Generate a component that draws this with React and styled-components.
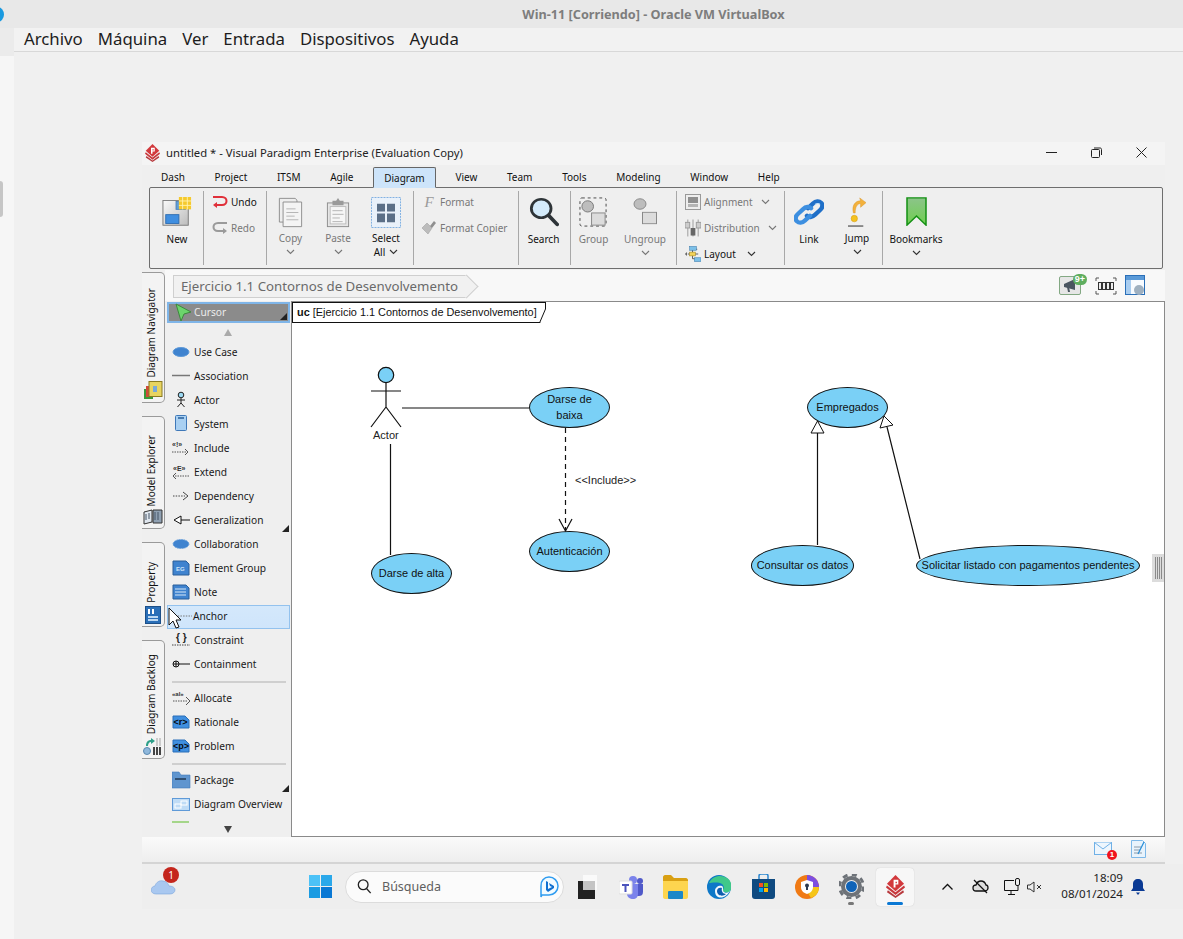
import React from "react";
import styled, { createGlobalStyle } from "styled-components";

const UI = `"Noto Sans", "Open Sans", sans-serif`;
const ARIAL = `"Liberation Sans", Arial, sans-serif`;

const GlobalStyle = createGlobalStyle`
  html, body { margin: 0; padding: 0; background: #f0f0f0; }
  * { box-sizing: border-box; }
`;

/* ---------- small svg helpers ---------- */
const Chevron = ({ color = "#333" }) => (
  <svg width="9" height="6" viewBox="0 0 9 6"><path d="M1 1l3.5 3.5L8 1" fill="none" stroke={color} strokeWidth="1.1" /></svg>
);

const VpLogo = ({ w = 15, h = 18 }) => (
  <svg width={w} height={h} viewBox="0 0 20 24">
    <path d="M10 0l9 9-9 8-9-8z" fill="#d2383c" />
    <path d="M1 11l9 7 9-7 1 2-10 8L0 13z" fill="#c9383c" />
    <path d="M2 16l8 6 8-6 1 2-9 6-9-6z" fill="#b83a3e" />
    <path d="M8 5h5v5h-3v3H8z" fill="#fff" />
    <path d="M10 7h1.5v1.5H10z" fill="#d2383c" />
  </svg>
);

const NewIcon = () => (
  <svg width="30" height="30" viewBox="0 0 32 34" preserveAspectRatio="none">
    <defs><linearGradient id="newg" x1="0" y1="0" x2="1" y2="1"><stop offset="0" stopColor="#fafafa" /><stop offset="1" stopColor="#bcbcbc" /></linearGradient></defs>
    <rect x="1" y="4" width="27" height="28" fill="url(#newg)" stroke="#777" />
    <rect x="15" y="5" width="10" height="9" fill="#5f9ed8" stroke="#4a80b8" />
    <rect x="4" y="20" width="14" height="10" fill="#3f8ee0" stroke="#2d6cb0" />
    <rect x="18" y="0" width="13" height="14" fill="#f5c92d" />
    <path d="M22 0v14M27 0v14M18 4.500h13M18 9.500h13" stroke="#fff3b0" strokeWidth="1" />
  </svg>
);

const UndoArrow = () => (
  <svg width="16" height="14" viewBox="0 0 16 14">
    <path d="M1 2h9c3 0 4.500 2 4.500 4s-1.500 4-4.500 4H4" fill="none" stroke="#e0303a" strokeWidth="2" />
    <path d="M5 7l-4 3 4 3z" fill="#e0303a" />
  </svg>
);

const RedoArrow = () => (
  <svg width="16" height="14" viewBox="0 0 16 14">
    <path d="M15 2H6C3 2 1.500 4 1.500 6S3 10 6 10h6" fill="none" stroke="#9a9a9a" strokeWidth="2" />
    <path d="M11 7l4 3-4 3z" fill="#9a9a9a" />
  </svg>
);

const CopyIcon = () => (
  <svg width="25" height="31" viewBox="0 0 27 34" preserveAspectRatio="none" fill="#eee" stroke="#8a8a8a">
    <path d="M1.500 1.500h17l2 2v24h-19z" />
    <path d="M5.500 5.500h20v27h-20z" fill="#f4f4f4" />
    <path d="M9 13h10M9 17h13M9 21h9M9 25h13" stroke="#b0b0b0" />
  </svg>
);

const PasteIcon = () => (
  <svg width="24" height="31" viewBox="0 0 26 34" preserveAspectRatio="none">
    <rect x="1.500" y="6.500" width="23" height="26" fill="#e6e6e6" stroke="#8a8a8a" />
    <rect x="4.500" y="10.500" width="17" height="19" fill="#f6f6f6" stroke="#bbb" />
    <path d="M13 1l2 3h4v5H7V4h4z" fill="#9a9a9a" />
    <path d="M7 15h11M7 19h12M7 23h8M7 27h11" stroke="#b0b0b0" />
  </svg>
);

const SelectAllIcon = () => (
  <svg width="30" height="31" viewBox="0 0 30 32" preserveAspectRatio="none">
    <rect x="0.500" y="0.500" width="29" height="31" fill="#e9f1fa" stroke="#7fb0e2" strokeDasharray="2 1" />
    <path d="M6 7h8v8H6zM16 7h8v8h-8zM6 17h8v9H6zM16 17h8v9h-8z" fill="#5b6f87" />
  </svg>
);

const FormatCopierIcon = () => (
  <svg width="16" height="16" viewBox="0 0 16 16">
    <path d="M6 3l5 5-4 6-6-6z" fill="#bcbcbc" stroke="#999" strokeWidth=".5" />
    <path d="M9 6l4-5 2 2-4 5z" fill="#8f8f8f" />
  </svg>
);

const SearchIcon = () => (
  <svg width="30" height="30" viewBox="0 0 32 34" preserveAspectRatio="none">
    <circle cx="13" cy="13" r="10.500" fill="#d4ebfb" stroke="#2e3438" strokeWidth="3" />
    <path d="M21 21l9 10" stroke="#2e3438" strokeWidth="4" strokeLinecap="round" />
  </svg>
);

const GroupIcon = () => (
  <svg width="29" height="30" viewBox="0 0 30 32" preserveAspectRatio="none">
    <rect x="1" y="1" width="27" height="30" fill="none" stroke="#444" strokeDasharray="3 3" rx="2" />
    <circle cx="9" cy="10" r="6" fill="#bdbdbd" stroke="#777" />
    <rect x="13" y="17" width="14" height="13" fill="#dcdcdc" stroke="#888" />
  </svg>
);

const UngroupIcon = () => (
  <svg width="26" height="28" viewBox="0 0 26 32" preserveAspectRatio="none">
    <circle cx="8" cy="8" r="6" fill="#bdbdbd" stroke="#888" />
    <rect x="10.500" y="17.500" width="14" height="13" fill="#dcdcdc" stroke="#888" />
  </svg>
);

const AlignIcon = () => (
  <svg width="16" height="16" viewBox="0 0 16 16">
    <rect x=".5" y=".5" width="15" height="15" fill="#eee" stroke="#999" />
    <rect x="3" y="3" width="10" height="6" fill="#8f8f8f" />
    <rect x="3" y="10" width="10" height="3" fill="#b5b5b5" />
  </svg>
);

const DistributeIcon = () => (
  <svg width="16" height="18" viewBox="0 0 17 18">
    <path d="M3 0v18M8.500 0v18M14 0v18" stroke="#999" />
    <rect x="0" y="3" width="5" height="6" fill="#ccc" stroke="#999" />
    <rect x="6" y="9" width="5" height="8" fill="#666" />
    <rect x="12" y="3" width="5" height="6" fill="#ccc" stroke="#999" />
  </svg>
);

const LayoutIcon = () => (
  <svg width="16" height="16" viewBox="0 0 17 16">
    <path d="M8 3v10M3 8h11M8 3h5M8 13h5" stroke="#555" />
    <rect x="5" y="0" width="7" height="4" fill="#7cc0e8" stroke="#3f7fb0" strokeWidth=".6" />
    <rect x="5" y="6" width="6" height="4" fill="#f2d25a" stroke="#a88a20" strokeWidth=".6" />
    <rect x="10" y="12" width="7" height="4" fill="#7cc0e8" stroke="#3f7fb0" strokeWidth=".6" />
    <path d="M0 8l2-2v4z" fill="#555" />
  </svg>
);

const LinkIcon = () => (
  <svg width="30" height="30" viewBox="0 0 30 32" preserveAspectRatio="none" fill="none">
    <path d="M14 12l5-5c3-3 6-3 8-1s2 5-1 8l-5 5c-3 3-6 3-8 1" stroke="#1f6fc8" strokeWidth="4.500" strokeLinecap="round" />
    <path d="M16 20l-5 5c-3 3-6 3-8 1s-2-5 1-8l5-5c3-3 6-3 8-1" stroke="#3d8fe0" strokeWidth="4.500" strokeLinecap="round" />
    <path d="M21 8c2-1.500 4-1.500 5 0" stroke="#bfe0fa" strokeWidth="1.200" />
  </svg>
);

const JumpIcon = () => (
  <svg width="18" height="30" viewBox="0 0 20 32" preserveAspectRatio="none">
    <path d="M6 17C4 9 8 4 14 4l-1-3 7 5-6 5V7C10 7 8 11 8 17z" fill="#f3b13c" stroke="#d99422" strokeWidth=".5" />
    <circle cx="7" cy="23" r="3.500" fill="#f4c21f" stroke="#d79a12" strokeWidth=".6" />
    <rect x="0" y="30" width="17" height="2" fill="#888" />
  </svg>
);

const BookmarkIcon = () => (
  <svg width="21" height="29" viewBox="0 0 21 32" preserveAspectRatio="none">
    <defs><linearGradient id="bmg" x1="0" y1="0" x2="0" y2="1"><stop offset="0" stopColor="#8cc48a" /><stop offset="1" stopColor="#6fcf4f" /></linearGradient></defs>
    <path d="M1 1h19v30l-9.500-10L1 31z" fill="url(#bmg)" stroke="#129012" strokeWidth="1.500" />
  </svg>
);

/* ---------- palette icons ---------- */
const icon = (children, w = 20, h = 18) => (
  <svg width={w} height={h} viewBox={`0 0 ${w} ${h}`}>{children}</svg>
);

const tinyText = { fontFamily: ARIAL, fontSize: 7, fontWeight: 700, fill: "#333" };

const paletteIcons = {
  cursor: icon(<path d="M2 1l15 8-7 2-3 7z" fill="#6cd46c" stroke="#3c8a3c" />),
  usecase: icon(<ellipse cx="9" cy="9" rx="8" ry="4.500" fill="#3f83cf" stroke="#5f9ad8" />),
  association: icon(<path d="M0 8.500h18" stroke="#777" strokeWidth="1.500" />),
  actor: icon(<g fill="none" stroke="#222"><circle cx="9" cy="4" r="2.800" fill="#9bd8f2" /><path d="M9 7v5M5 9h8M9 12l-3.500 4M9 12l3.500 4" /></g>),
  system: icon(<g><rect x="3.500" y=".5" width="11" height="15" rx="1" fill="#a9d0f2" stroke="#3f78b8" /><path d="M6 3h6" stroke="#2a5f99" strokeWidth="1.500" /></g>),
  include: icon(<g><text x="0" y="8" style={tinyText}>«!»</text><path d="M0 13h14" stroke="#555" strokeDasharray="1.500 1" /><path d="M13 10l3 3-3 3" fill="none" stroke="#555" /></g>),
  extend: icon(<g><text x="1" y="8" style={tinyText}>«E»</text><path d="M3 13h14" stroke="#555" strokeDasharray="1.500 1" /><path d="M4 10l-3 3 3 3" fill="none" stroke="#555" /></g>),
  dependency: icon(<g fill="none" stroke="#444"><path d="M1 9h12" strokeDasharray="1.500 1.200" /><path d="M11 5l5 4-5 4" /></g>),
  generalization: icon(<g fill="#fff" stroke="#111"><path d="M9 9h9" /><path d="M9 5l-7 4 7 4z" /></g>),
  collaboration: icon(<ellipse cx="9" cy="9" rx="8" ry="4.500" fill="#3f83cf" stroke="#6fa4dc" strokeDasharray="1.500 1" />),
  elementgroup: icon(<g><path d="M1 2h13l3 3v11H1z" fill="#3f83cf" stroke="#2a5f99" /><text x="4" y="12" style={{ ...tinyText, fontSize: 6, fill: "#cfe6fa" }}>EG</text></g>),
  note: icon(<g><path d="M1 2h13l3 3v11H1z" fill="#3f83cf" stroke="#2a5f99" /><path d="M3 6h11M3 9h11M3 12h11" stroke="#d8e9f8" /></g>),
  anchor: icon(<path d="M3 9h17" stroke="#777" strokeDasharray="1.500 1.200" />),
  constraint: icon(<g><text x="4" y="10" style={{ ...tinyText, fontSize: 10, fill: "#222" }}>{"{ }"}</text><path d="M0 14h18" stroke="#444" strokeDasharray="1.500 1" /></g>),
  containment: icon(<g fill="none" stroke="#111"><circle cx="4" cy="9" r="3" /><path d="M1 9h17M4 6v6" /></g>),
  allocate: icon(<g><text x="0" y="7" style={{ ...tinyText, fontSize: 6 }}>«al»</text><path d="M1 12h15" stroke="#555" strokeDasharray="1.500 1" /><path d="M14 8l4 4-4 4" fill="none" stroke="#555" /></g>),
  rationale: icon(<g><path d="M1 3h12l4 4v8H1z" fill="#3f8fe0" stroke="#2a6fb8" /><text x="1.500" y="12" style={{ ...tinyText, fontSize: 9, fill: "#050a12" }}>{"<r>"}</text></g>),
  problem: icon(<g><path d="M1 3h12l4 4v8H1z" fill="#3f8fe0" stroke="#2a6fb8" /><text x="1" y="12" style={{ ...tinyText, fontSize: 9, fill: "#050a12" }}>{"<p>"}</text></g>),
  package: icon(<g><path d="M0 1h7l2 3h9v13H0z" fill="#5f95cf" stroke="#3f78b8" strokeWidth=".6" /><path d="M3 8h11" stroke="#123" strokeWidth="1.200" /></g>),
  overview: icon(<g fill="none"><rect x=".5" y="3.500" width="17" height="12" fill="#bfdcf6" stroke="#5f9ad8" /><rect x="3" y="9" width="6" height="4" stroke="#fff" /><rect x="9" y="6" width="6" height="4" stroke="#fff" /></g>),
};

/* ---------- data ---------- */
const tabs = ["Dash", "Project", "ITSM", "Agile", "Diagram", "View", "Team", "Tools", "Modeling", "Window", "Help"];

const paletteTop = [
  ["usecase", "Use Case"], ["association", "Association"], ["actor", "Actor"], ["system", "System"],
  ["include", "Include"], ["extend", "Extend"], ["dependency", "Dependency"],
  ["generalization", "Generalization", "more"], ["collaboration", "Collaboration"],
  ["elementgroup", "Element Group"], ["note", "Note"], ["anchor", "Anchor", "hover"],
  ["constraint", "Constraint"], ["containment", "Containment"],
];
const paletteMid = [["allocate", "Allocate"], ["rationale", "Rationale"], ["problem", "Problem"]];
const paletteEnd = [["package", "Package", "more"], ["overview", "Diagram Overview"]];

const useCases = [
  { x: 237, y: 85, w: 81, h: 41, label: "Darse de baixa", wrap: true },
  { x: 237, y: 229, w: 81, h: 41, label: "Autenticación" },
  { x: 79, y: 251, w: 81, h: 41, label: "Darse de alta" },
  { x: 515, y: 85, w: 81, h: 41, label: "Empregados" },
  { x: 459, y: 243, w: 103, h: 41, label: "Consultar os datos" },
  { x: 624, y: 243, w: 224, h: 41, label: "Solicitar listado con pagamentos pendentes" },
];

/* ---------- page frame ---------- */
const Screen = styled.div`
  width: 1183px;
  height: 939px;
  position: relative;
  overflow: hidden;
  background: #f0f0f0;
  font-family: ${UI};
  color: #111;
`;

const HostTitle = styled.div`
  height: 28px;
  background: #e8e8e8;
  display: flex;
  align-items: center;
  justify-content: center;
  padding-left: 124px;
  font: 700 12.700px ${UI};
  color: #7d7d7d;
`;

const HostDot = styled.span`
  position: absolute;
  left: -9px;
  top: 7px;
  width: 13px;
  height: 15px;
  border-radius: 50%;
  background: #1a9ae0;
`;

const HostBody = styled.div`
  display: flex;
  height: 911px;
`;

const Rail = styled.div`
  width: 14px;
  background: linear-gradient(#ebebeb 0 28px, #f6f6f6 28px);
  padding-top: 153px;
`;

const RailKnob = styled.div`
  width: 3px;
  height: 36px;
  background: #c6c6c6;
  border-radius: 0 3px 3px 0;
`;

const Guest = styled.div`
  flex: 1;
  display: flex;
  flex-direction: column;
`;

const HostMenu = styled.div`
  height: 24px;
  display: flex;
  align-items: center;
  gap: 15px;
  padding: 0 0 2px 10px;
  background: #f2f2f2;
  border-bottom: 1px solid #d8d8d8;
  font: 400 16.800px ${UI};
  color: #1d1d1d;
`;

const Desktop = styled.div`
  flex: 1;
  padding: 90px 0 0 128px;
  display: flex;
  flex-direction: column;
`;

/* ---------- window ---------- */
const Window = styled.div`
  width: 1023px;
  height: 722px;
  background: #efefef;
  display: flex;
  flex-direction: column;
`;

const WinTitle = styled.div`
  height: 23px;
  background: #f4f4f4;
  display: flex;
  align-items: center;
  padding: 0 1px 2px 3px;
  font-size: 11.270px;
  color: #222;
`;

const WinTitleText = styled.span`
  margin-left: 6px;
  flex: 1;
`;

const WinBtn = styled.span`
  width: 45px;
  display: flex;
  justify-content: center;
`;

const TabRow = styled.div`
  height: 22px;
  display: flex;
  align-items: flex-end;
  gap: 7.700px;
  padding-left: 8px;
`;

const Tab = styled.div`
  height: ${(p) => (p.$active ? "21px" : "20px")};
  padding: 0 ${(p) => (p.$active ? "10px" : "11px")};
  display: flex;
  align-items: center;
  font-size: 10px;
  color: #111;
  margin-bottom: ${(p) => (p.$active ? "-1px" : "0")};
  position: relative;
  z-index: 1;
  ${(p) => p.$active && `
    margin-left: 1px;
    margin-right: 1px;
    background: #cde4fa;
    border: 1px solid #666;
    border-bottom: 1px solid #cde4fa;
    border-radius: 2px 2px 0 0;
  `}
`;

const Ribbon = styled.div`
  margin-left: 7px;
  width: 1014px;
  height: 82px;
  border: 1px solid #6e6e6e;
  border-radius: 2px;
  display: flex;
  padding: 3px 0;
  background: #efefef;
  flex-shrink: 0;
`;

const Section = styled.div`
  width: ${(p) => p.$w}px;
  flex-shrink: 0;
  display: flex;
  margin-top: 0;
  border-right: ${(p) => (p.$last ? "none" : "1px solid #a8a8a8")};
`;

const SmallColumn = styled.div`
  display: flex;
  flex-direction: column;
  margin-top: -2px;
  padding-left: ${(p) => p.$pad || 8}px;
`;

const SmallBtn = styled.div`
  height: 26px;
  flex-shrink: 0;
  display: flex;
  align-items: center;
  gap: ${(p) => p.$gap || 3}px;
  font-size: 10px;
  color: ${(p) => (p.$off ? "#787878" : "#111")};
`;

const ChevronSlot = styled.span`
  margin-left: ${(p) => p.$gap || 5}px;
  display: inline-flex;
`;

const FakeF = styled.span`
  width: 16px;
  text-align: center;
  font: italic 400 15px "Liberation Serif", serif;
  color: #9a9a9a;
`;

const LargeBtn = styled.div`
  width: ${(p) => p.$w}px;
  flex-shrink: 0;
  display: flex;
  flex-direction: column;
  align-items: center;
  font-size: 10px;
  line-height: 14px;
  color: ${(p) => (p.$off ? "#787878" : "#111")};
`;

const IconSlot = styled.div`
  height: ${(p) => (p.$low ? 35 : 34)}px;
  margin-top: 6px;
  display: flex;
  justify-content: center;
  align-items: flex-start;
`;

const ChevronRow = styled.div`
  height: 14px;
  display: flex;
  align-items: center;
  justify-content: center;
  gap: 4px;
`;

/* ---------- workspace ---------- */
const Workspace = styled.div`
  flex: 1;
  display: flex;
  min-height: 0;
  margin-top: 1px;
`;

const SideTabs = styled.div`
  width: 23px;
  padding-top: 2px;
  display: flex;
  flex-direction: column;
  gap: 13px;
  flex-shrink: 0;
`;

const SideTab = styled.div`
  height: ${(p) => p.$h}px;
  border: 1px solid #9a9a9a;
  border-left: none;
  border-radius: 0 5px 5px 0;
  background: #f3f3f3;
  display: flex;
  flex-direction: column;
  align-items: center;
  justify-content: flex-end;
  padding-bottom: 2px;
  gap: 3px;
`;

const SideLabel = styled.span`
  writing-mode: vertical-rl;
  transform: translateX(-2px) rotate(180deg);
  font-size: 10px;
  color: #111;
  white-space: nowrap;
`;

const MainColumn = styled.div`
  flex: 1;
  display: flex;
  flex-direction: column;
  min-width: 0;
`;

const CrumbRow = styled.div`
  height: 31px;
  display: flex;
  align-items: flex-start;
  padding: 5px 0 0 8px;
  background: #f8f8f8;
  position: relative;
`;

const Crumb = styled.div`
  height: 23px;
  width: 294px;
  border: 1px solid #cfcfcf;
  border-right: none;
  background: #f1f1f1;
  display: flex;
  align-items: center;
  padding: 0 0 2px 7px;
  font-size: 13.250px;
  color: #6a6a6a;
  white-space: nowrap;
  position: relative;

  &::after {
    content: "";
    position: absolute;
    right: -8px;
    top: 2px;
    width: 16px;
    height: 16px;
    transform: rotate(45deg);
    background: #f1f1f1;
    border-top: 1px solid #cfcfcf;
    border-right: 1px solid #cfcfcf;
  }
`;

const CrumbText = styled.span`
  position: relative;
  z-index: 1;
`;

const CrumbTools = styled.div`
  margin-left: auto;
  display: flex;
  align-items: center;
  gap: 14px;
  padding-right: 20px;
`;

const PanelIcon = styled.svg`
  margin-left: -6px;
`;

const Megaphone = styled.div`
  width: 22px;
  height: 19px;
  border: 1px solid #83a883;
  border-radius: 2px;
  background: #e6e6e6;
  display: flex;
  align-items: center;
  justify-content: center;
  position: relative;
`;

const GreenBadge = styled.span`
  position: absolute;
  right: -7px;
  top: -3px;
  height: 11px;
  padding: 0 2px;
  border-radius: 6px;
  background: #5fae5f;
  color: #fff;
  font: 700 9px/11px ${ARIAL};
`;

const Stage = styled.div`
  flex: 1;
  display: flex;
  min-height: 0;
`;

const Palette = styled.div`
  width: 126px;
  padding: 1px 0 0 2px;
  flex-shrink: 0;
  display: flex;
  flex-direction: column;
  overflow: hidden;
`;

const CursorRow = styled.div`
  width: 123px;
  height: 21px;
  background: #8b8b8b;
  border: 2px solid #7fb5e8;
  display: flex;
  align-items: center;
  padding: 0 0 2px 5px;
  font-size: 10.200px;
  color: #ececec;
  position: relative;
  flex-shrink: 0;
`;

const Corner = styled.span`
  position: absolute;
  right: 1px;
  bottom: 1px;
  border-style: solid;
  border-width: 0 0 7px 7px;
  border-color: transparent transparent #222 transparent;
`;

const ArrowRow = styled.div`
  height: ${(p) => p.$h}px;
  display: flex;
  justify-content: center;
  align-items: center;
  padding-right: 2px;
  flex-shrink: 0;
`;

const Triangle = styled.span`
  border-style: solid;
  border-width: ${(p) => (p.$down ? "7px 4.500px 0" : "0 4.500px 7px")};
  border-color: ${(p) => (p.$down ? "#444 transparent transparent" : "transparent transparent #aaa")};
`;

const PaletteRow = styled.div`
  width: 123px;
  height: 24px;
  display: flex;
  align-items: center;
  padding: 0 0 2px 5px;
  gap: 2px;
  font-size: 10.200px;
  color: #1a1a1a;
  position: relative;
  flex-shrink: 0;
  ${(p) => p.$hover && `
    background: linear-gradient(#d4e8fb, #cfe5fb);
    border: 1px solid #93c2ee;
    padding: 0 0 3px 4px;
    gap: 1px;
  `}
`;

const PaletteIcon = styled.span`
  width: 20px;
  height: 18px;
  display: flex;
  flex-shrink: 0;
`;

const PaletteRule = styled.div`
  height: 2px;
  margin: 4px 5px 4px 5px;
  background: #cfcfcf;
  flex-shrink: 0;
`;

const CutRow = styled.div`
  height: 6px;
  padding: 4px 0 0 5px;
  flex-shrink: 0;
`;

const GreenEdge = styled.div`
  width: 17px;
  height: 2px;
  background: #a5d68a;
`;

const MouseCursor = styled.svg`
  position: absolute;
  left: 0;
  top: 1px;
  z-index: 2;
`;

const Canvas = styled.div`
  flex: 1;
  background: #fff;
  border: 1px solid #8a8a8a;
  position: relative;
  overflow: hidden;
`;

const FrameTag = styled.div`
  position: absolute;
  left: 0;
  top: 0;
  height: 21px;
  width: 254px;
  display: flex;
  align-items: center;
  padding: 0 0 2px 4px;
  font: 400 10.900px ${ARIAL};
  color: #111;
  white-space: nowrap;
  background: #fff;
  border: 1px solid #111;
  border-right: none;
  clip-path: polygon(0 0, 100% 0, 100% 30%, calc(100% - 6px) 100%, 0 100%);
  b { margin-right: 3px; }
`;

const FrameCorner = styled.svg`
  position: absolute;
  left: 0;
  top: 0;
`;

const Edges = styled.svg`
  position: absolute;
  left: 0;
  top: 0;
`;

const UseCase = styled.div`
  position: absolute;
  left: ${(p) => p.$x}px;
  top: ${(p) => p.$y}px;
  width: ${(p) => p.$w}px;
  height: ${(p) => p.$h}px;
  border-radius: 50%;
  background: #7ad0f6;
  border: 1px solid #111;
  display: flex;
  align-items: center;
  justify-content: center;
  text-align: center;
  font: 400 11px/16px ${ARIAL};
  color: #111;
  padding: 0 ${(p) => (p.$wrap ? "14px" : "0")} 2px;
  white-space: ${(p) => (p.$wrap ? "normal" : "nowrap")};
`;

const CanvasLabel = styled.span`
  position: absolute;
  left: ${(p) => p.$x}px;
  top: ${(p) => p.$y}px;
  font: 400 11px/14px ${ARIAL};
  color: #222;
  white-space: nowrap;
`;

const Splitter = styled.div`
  position: absolute;
  left: 860px;
  top: 252px;
  width: 13px;
  height: 28px;
  background: #dcdcdc;
  display: flex;
  justify-content: center;
  gap: 1px;
  padding: 3px 0;
`;

const SplitLine = styled.span`
  width: 1px;
  background: #8a8a8a;
`;

const StatusBar = styled.div`
  height: 27px;
  margin-top: 0;
  flex-shrink: 0;
  background: linear-gradient(#fafafa, #eeeeee);
  border-bottom: 2px solid #d4d4d4;
  display: flex;
  align-items: center;
  justify-content: flex-end;
  gap: 19px;
  padding: 0 19px 2px 0;
`;

const MailWrap = styled.div`
  position: relative;
  display: flex;
`;

const RedDot = styled.span`
  position: absolute;
  right: -5px;
  bottom: -5px;
  width: 10px;
  height: 10px;
  border-radius: 50%;
  background: #f0141e;
  color: #fff;
  font: 700 8px/10px ${ARIAL};
  text-align: center;
`;

/* ---------- taskbar ---------- */
const Taskbar = styled.div`
  height: 45px;
  display: flex;
  align-items: center;
  background: #eeeeee;
  flex-shrink: 0;
`;

const Weather = styled.div`
  width: 167px;
  padding-left: 9px;
  position: relative;
  display: flex;
  align-items: center;
`;

const WeatherBadge = styled.span`
  position: absolute;
  left: 21px;
  top: -12px;
  width: 16px;
  height: 16px;
  border-radius: 50%;
  background: #c4261d;
  color: #fff;
  font: 400 10px/16px ${UI};
  text-align: center;
`;

const SearchBox = styled.div`
  width: 219px;
  height: 32px;
  margin-left: 13px;
  border: 1px solid #dcdcdc;
  border-radius: 16px;
  background: #fbfbfb;
  display: flex;
  align-items: center;
  padding: 0 4px 0 11px;
  font-size: 12.500px;
  color: #5f5f5f;
`;

const SearchWord = styled.span`
  margin-left: 10px;
  flex: 1;
`;

const TaskSlots = styled.div`
  display: flex;
  margin-left: 1px;
`;

const TaskSlot = styled.div`
  width: 44px;
  height: 38px;
  display: flex;
  align-items: center;
  justify-content: center;
  position: relative;
  border-radius: 4px;
  ${(p) => p.$active && `
    width: 38px;
    margin-left: 3px;
    background: #f7f7f7;
    box-shadow: 0 0 1px #bbb;
  `}
`;

const RunDot = styled.span`
  position: absolute;
  bottom: 1px;
  left: 50%;
  width: ${(p) => (p.$active ? "16px" : "6px")};
  height: 3px;
  margin-left: ${(p) => (p.$active ? "-8px" : "-3px")};
  border-radius: 2px;
  background: ${(p) => (p.$active ? "#0a78d4" : "#777")};
`;

const Tray = styled.div`
  display: flex;
  align-items: center;
  margin-left: 28px;
  gap: 0;
`;

const TraySlot = styled.span`
  width: ${(p) => p.$w}px;
  display: flex;
  justify-content: ${(p) => p.$j || "flex-start"};
`;

const Clock = styled.div`
  width: 80px;
  padding-bottom: 2px;
  text-align: right;
  font-size: 11.600px;
  line-height: 16px;
  color: #222;
`;

const Bell = styled.span`
  margin-left: 8px;
  display: flex;
`;

/* ---------- parts ---------- */
const Row = ({ id, label, flag }) => (
  <PaletteRow $hover={flag === "hover"}>
    <PaletteIcon>{paletteIcons[id]}</PaletteIcon>
    {label}
    {flag === "more" && <Corner />}
    {flag === "hover" && (
      <MouseCursor width="14" height="22" viewBox="0 0 14 22">
        <path d="M1 1v17l4-4 3 7 3-1-3-7h5z" fill="#fff" stroke="#111" />
      </MouseCursor>
    )}
  </PaletteRow>
);

const NavIcon = () => (
  <svg width="19" height="19" viewBox="0 0 19 19">
    <rect x="0" y="8" width="9" height="10" fill="#3a9a3a" />
    <rect x="2" y="5" width="10" height="11" fill="#d04a3a" />
    <rect x="5" y="0.500" width="13" height="15" fill="#e8d460" stroke="#8a7a20" />
    <rect x="9" y="5" width="4" height="6" fill="#7aa8d8" />
  </svg>
);
const ModelIcon = () => (
  <svg width="20" height="17" viewBox="0 0 20 17">
    <path d="M1 3l8-2v12l-8 2z" fill="#dfe6ee" stroke="#333" />
    <path d="M10 1h9v13h-9z" fill="#8fa0b2" stroke="#333" />
    <path d="M3 5v6M6 4v6M12 3v8M15 3v8" stroke="#456" />
  </svg>
);
const PropIcon = () => (
  <svg width="16" height="18" viewBox="0 0 16 18">
    <rect x=".5" y=".5" width="15" height="17" fill="#2a6fb8" stroke="#1c4f88" />
    <path d="M4 3v5M8 3v5" stroke="#fff" strokeWidth="2" />
    <path d="M3 11h10M3 14h10" stroke="#bcd8f2" strokeWidth="2" />
  </svg>
);
const BacklogIcon = () => (
  <svg width="20" height="19" viewBox="0 0 20 19">
    <path d="M3 9c0-4 2-6 5-6V1l4 3-4 3V5C6 5 5 7 5 9z" fill="#2fa08a" />
    <circle cx="4" cy="14" r="3.500" fill="#8fb8dc" stroke="#5a88b0" />
    <path d="M10 10h2v8h-2zM13 10h2v8h-2zM16 10h2v8h-2z" fill="#444" />
    <path d="M13 1h2v8h-2zM16 1h2v8h-2z" fill="#ccc" />
  </svg>
);

const Teams = () => (
  <svg width="25" height="24" viewBox="0 0 25 24">
    <circle cx="14" cy="5" r="4" fill="#7b83eb" /><circle cx="21" cy="6" r="3" fill="#5059c9" />
    <path d="M17 9h7v8c0 3-2 4-4 4h-3z" fill="#5059c9" />
    <path d="M8 9h11v10c0 3-2 5-5 5s-6-2-6-5z" fill="#7b83eb" />
    <rect x="0" y="6" width="13" height="13" rx="1" fill="#fff" stroke="#ddd" />
    <path d="M3 9h7v2H7.500v6h-2v-6H3z" fill="#4b53bc" />
  </svg>
);
const Folder = () => (
  <svg width="25" height="24" viewBox="0 0 25 24">
    <path d="M0 2c0-1 1-2 2-2h6l3 3h12c1 0 2 1 2 2v4H0z" fill="#d9a013" />
    <path d="M0 6h25v16c0 1-1 2-2 2H2c-1 0-2-1-2-2z" fill="#fdd54f" />
    <rect x="5" y="16" width="15" height="8" rx="1" fill="#1d88c8" />
  </svg>
);
const Edge = () => (
  <svg width="24" height="24" viewBox="0 0 24 24">
    <circle cx="12" cy="12" r="12" fill="#0d78c8" />
    <path d="M2 8C5 1 14-1 20 3s5 11 3 13c-1 2-7 2-8-1 3-1 2-6-2-7C8 7 4 8 2 8z" fill="#40c88a" />
    <path d="M8 16c0-4 4-6 7-5 2 1 0 5 2 6 3 2 5 0 6-2-2 6-8 9-12 7-2-1-3-3-3-6z" fill="#fff" opacity=".95" />
    <path d="M10 16c0-3 3-4 5-3-1 3 1 6 4 6-3 3-9 2-9-3z" fill="#0f5fb0" />
  </svg>
);
const Store = () => (
  <svg width="23" height="25" viewBox="0 0 23 25">
    <path d="M7 5V2c0-1 1-2 2-2h5c1 0 2 1 2 2v3" fill="none" stroke="#2a86d0" strokeWidth="1.500" />
    <path d="M0 5h23v17c0 2-1 3-3 3H3c-2 0-3-1-3-3z" fill="#0f4a80" />
    <rect x="7" y="9" width="4" height="4" fill="#f25022" /><rect x="12" y="9" width="4" height="4" fill="#7fba00" />
    <rect x="7" y="14" width="4" height="4" fill="#00a4ef" /><rect x="12" y="14" width="4" height="4" fill="#ffb900" />
  </svg>
);
const Shield = () => (
  <svg width="24" height="24" viewBox="0 0 24 24">
    <circle cx="12" cy="12" r="12" fill="#f07a14" />
    <path d="M12 0a12 12 0 0 1 12 12h-6a6 6 0 0 0-6-6z" fill="#7d4ee0" />
    <path d="M24 12a12 12 0 0 1-8 11l-3-5c3-1 5-3 5-6z" fill="#f5c518" />
    <path d="M12 5l6 2v5c0 4-3 6-6 7-3-1-6-3-6-7V7z" fill="#fff" />
    <circle cx="12" cy="10.500" r="2" fill="#2c3a4f" /><rect x="11" y="11" width="2" height="4" fill="#2c3a4f" />
  </svg>
);
const Gear = () => (
  <svg width="25" height="25" viewBox="0 0 25 25">
    <circle cx="12.500" cy="12.500" r="8.500" fill="none" stroke="#6d7278" strokeWidth="4" />
    <circle cx="12.500" cy="12.500" r="12" fill="none" stroke="#6d7278" strokeWidth="3" strokeDasharray="5 4.420" />
    <circle cx="12.500" cy="12.500" r="5.500" fill="#0f63b8" />
  </svg>
);

export default function App() {
  return (
    <>
      <GlobalStyle />
      <Screen>
        <HostDot />
        <HostTitle>Win-11 [Corriendo] - Oracle VM VirtualBox</HostTitle>
        <HostBody>
          <Rail><RailKnob /></Rail>
          <Guest>
            <HostMenu>
              {["Archivo", "Máquina", "Ver", "Entrada", "Dispositivos", "Ayuda"].map((m) => <span key={m}>{m}</span>)}
            </HostMenu>
            <Desktop>
              <Window>
                <WinTitle>
                  <VpLogo />
                  <WinTitleText>untitled * - Visual Paradigm Enterprise (Evaluation Copy)</WinTitleText>
                  <WinBtn><svg width="11" height="11"><path d="M0 5.500h11" stroke="#222" /></svg></WinBtn>
                  <WinBtn><svg width="11" height="11" fill="none" stroke="#222"><rect x=".5" y="2.500" width="8" height="8" rx="1" /><path d="M3 1h6c1 0 1.500.5 1.500 1.500V8" /></svg></WinBtn>
                  <WinBtn><svg width="11" height="11"><path d="M.5.5l10 10M10.500.5l-10 10" stroke="#222" /></svg></WinBtn>
                </WinTitle>
                <TabRow>
                  {tabs.map((t) => <Tab key={t} $active={t === "Diagram"}>{t}</Tab>)}
                </TabRow>
                <Ribbon>
                  <Section $w={54}>
                    <LargeBtn $w={54}><IconSlot $low><NewIcon /></IconSlot>New</LargeBtn>
                  </Section>
                  <Section $w={63}>
                    <SmallColumn>
                      <SmallBtn><UndoArrow />Undo</SmallBtn>
                      <SmallBtn $off><RedoArrow />Redo</SmallBtn>
                    </SmallColumn>
                  </Section>
                  <Section $w={147}>
                    <LargeBtn $w={47} $off><IconSlot><CopyIcon /></IconSlot>Copy<ChevronRow><Chevron color="#777" /></ChevronRow></LargeBtn>
                    <LargeBtn $w={48} $off><IconSlot><PasteIcon /></IconSlot>Paste<ChevronRow><Chevron color="#777" /></ChevronRow></LargeBtn>
                    <LargeBtn $w={48}><IconSlot><SelectAllIcon /></IconSlot>Select<ChevronRow>All <Chevron /></ChevronRow></LargeBtn>
                  </Section>
                  <Section $w={105}>
                    <SmallColumn $pad={7}>
                      <SmallBtn $off $gap={3}><FakeF>F</FakeF>Format</SmallBtn>
                      <SmallBtn $off $gap={3}><FormatCopierIcon />Format Copier</SmallBtn>
                    </SmallColumn>
                  </Section>
                  <Section $w={52}>
                    <LargeBtn $w={49}><IconSlot $low><SearchIcon /></IconSlot>Search</LargeBtn>
                  </Section>
                  <Section $w={106}>
                    <LargeBtn $w={45} $off><IconSlot $low><GroupIcon /></IconSlot>Group</LargeBtn>
                    <LargeBtn $w={58} $off><IconSlot $low><UngroupIcon /></IconSlot>Ungroup<ChevronRow><Chevron color="#777" /></ChevronRow></LargeBtn>
                  </Section>
                  <Section $w={108}>
                    <SmallColumn>
                      <SmallBtn $off><AlignIcon />Alignment<ChevronSlot><Chevron color="#777" /></ChevronSlot></SmallBtn>
                      <SmallBtn $off><DistributeIcon />Distribution<ChevronSlot><Chevron color="#777" /></ChevronSlot></SmallBtn>
                      <SmallBtn><LayoutIcon />Layout<ChevronSlot $gap={8}><Chevron /></ChevronSlot></SmallBtn>
                    </SmallColumn>
                  </Section>
                  <Section $w={98}>
                    <LargeBtn $w={48}><IconSlot $low><LinkIcon /></IconSlot>Link</LargeBtn>
                    <LargeBtn $w={48}><IconSlot><JumpIcon /></IconSlot>Jump<ChevronRow><Chevron /></ChevronRow></LargeBtn>
                  </Section>
                  <Section $w={68} $last>
                    <LargeBtn $w={66}><IconSlot $low><BookmarkIcon /></IconSlot>Bookmarks<ChevronRow><Chevron /></ChevronRow></LargeBtn>
                  </Section>
                </Ribbon>
                <Workspace>
                  <SideTabs>
                    <SideTab $h={131}><SideLabel>Diagram Navigator</SideLabel><NavIcon /></SideTab>
                    <SideTab $h={113}><SideLabel>Model Explorer</SideLabel><ModelIcon /></SideTab>
                    <SideTab $h={85}><SideLabel>Property</SideLabel><PropIcon /></SideTab>
                    <SideTab $h={119}><SideLabel>Diagram Backlog</SideLabel><BacklogIcon /></SideTab>
                  </SideTabs>
                  <MainColumn>
                    <CrumbRow>
                      <Crumb><CrumbText>Ejercicio 1.1 Contornos de Desenvolvemento</CrumbText></Crumb>
                      <CrumbTools>
                        <Megaphone>
                          <svg width="15" height="13" viewBox="0 0 15 13"><path d="M1 5l11-5v11L1 8z" fill="#4a5560" /><path d="M4 8l1 5h2L6 8z" fill="#4a5560" /></svg>
                          <GreenBadge>9+</GreenBadge>
                        </Megaphone>
                        <svg width="22" height="18" viewBox="0 0 22 18" fill="none" stroke="#555"><path d="M1 4V1h3M18 1h3v3M1 14v3h3M18 17h3v-3" /><rect x="3.500" y="5.500" width="15" height="7" fill="#eee" stroke="#333" /><path d="M7 6v6M11 6v6M15 6v6" stroke="#333" strokeWidth="2" /></svg>
                        <PanelIcon width="20" height="21" viewBox="0 0 20 21"><rect x=".5" y=".5" width="19" height="19" fill="#f8fbff" stroke="#2a6fb8" /><rect x="1" y="1" width="18" height="4" fill="#5a9ad8" /><rect x="1" y="5" width="5" height="14" fill="#a9cdf0" /><circle cx="14" cy="15" r="5" fill="#9fb0c0" /></PanelIcon>
                      </CrumbTools>
                    </CrumbRow>
                    <Stage>
                      <Palette>
                        <CursorRow>
                          <PaletteIcon>{paletteIcons.cursor}</PaletteIcon>Cursor<Corner />
                        </CursorRow>
                        <ArrowRow $h={18}><Triangle /></ArrowRow>
                        {paletteTop.map(([id, label, flag]) => <Row key={id} id={id} label={label} flag={flag} />)}
                        <PaletteRule />
                        {paletteMid.map(([id, label]) => <Row key={id} id={id} label={label} />)}
                        <PaletteRule />
                        {paletteEnd.map(([id, label, flag]) => <Row key={id} id={id} label={label} flag={flag} />)}
                        <CutRow><GreenEdge /></CutRow>
                        <ArrowRow $h={12}><Triangle $down /></ArrowRow>
                      </Palette>
                      <Canvas>
                        <Edges width="873" height="533" viewBox="292 302 873 533">
                          <g fill="none" stroke="#111" strokeWidth="1.200">
                            <circle cx="386" cy="375" r="7.700" fill="#7ad0f6" />
                            <path d="M386 383v24M371 391h30M386 407l-15 20M386 407l15 20" />
                            <path d="M402 408h127M390.500 444v111" />
                            <path d="M565.500 428v102" strokeDasharray="5 4" />
                            <path d="M559 519l6.500 12 6.500-12" />
                            <path d="M817.500 545V433M920 559L887 427" />
                          </g>
                        </Edges>
                        {useCases.map((u) => (
                          <UseCase key={u.label} $x={u.x} $y={u.y} $w={u.w} $h={u.h} $wrap={u.wrap}>{u.label}</UseCase>
                        ))}
                        <Edges width="873" height="533" viewBox="292 302 873 533">
                          <g fill="#fff" stroke="#111" strokeWidth="1">
                            <path d="M817.500 421l6.500 12h-13z" />
                            <path d="M884 416l9 9-13 3z" />
                          </g>
                        </Edges>
                        <CanvasLabel $x={81} $y={126}>Actor</CanvasLabel>
                        <CanvasLabel $x={283} $y={171}>{"<<Include>>"}</CanvasLabel>
                        <FrameTag><b>uc</b>[Ejercicio 1.1 Contornos de Desenvolvemento]</FrameTag>
                        <FrameCorner width="256" height="22"><path d="M253.500 0v7l-6 14" fill="none" stroke="#111" /></FrameCorner>
                        <Splitter><SplitLine /><SplitLine /><SplitLine /><SplitLine /></Splitter>
                      </Canvas>
                    </Stage>
                  </MainColumn>
                </Workspace>
                <StatusBar>
                  <MailWrap>
                    <svg width="18" height="13" viewBox="0 0 18 13" fill="#eef6fd" stroke="#6fb0e6"><rect x=".5" y=".5" width="17" height="12" /><path d="M.5.5L9 7l8.500-6.500" /></svg>
                    <RedDot>1</RedDot>
                  </MailWrap>
                  <svg width="15" height="18" viewBox="0 0 15 18"><path d="M.5.5h11l3 3v14H.5z" fill="#e8f3fc" stroke="#7db8e8" /><path d="M3 7h7M3 10h6M3 13h8" stroke="#8a9aa8" /><path d="M7 14l6-12" stroke="#2a8fd8" strokeWidth="1.200" /></svg>
                </StatusBar>
              </Window>
              <Taskbar>
                <Weather>
                  <svg width="25" height="16" viewBox="0 0 25 16"><path d="M5 15C2 15 0 13 0 11s2-4 4-4c1-4 5-6 8-5 3 0 5 2 6 5 4 0 6 2 6 4s-2 4-5 4z" fill="#a9c8f0" stroke="#7aa4dc" strokeWidth=".6" /></svg>
                  <WeatherBadge>1</WeatherBadge>
                </Weather>
                <svg width="23" height="23" viewBox="0 0 23 23">
                  <rect width="11" height="11" fill="#4cc2f7" /><rect x="12" width="11" height="11" fill="#2aa8ea" />
                  <rect y="12" width="11" height="11" fill="#1a9be2" /><rect x="12" y="12" width="11" height="11" fill="#0a78d4" />
                </svg>
                <SearchBox>
                  <svg width="15" height="15" viewBox="0 0 16 17" fill="none" stroke="#222" strokeWidth="1.500"><circle cx="6.500" cy="6.500" r="5.500" /><path d="M10.500 11l4.500 5" /></svg>
                  <SearchWord>Búsqueda</SearchWord>
                  <svg width="20" height="22" viewBox="0 0 20 22">
                    <path d="M10 1a9 9 0 0 1 9 9c0 5-4 9-9 9H3l-1 2V10a8 8 0 0 1 8-9z" fill="#f2fbff" stroke="#2f9cf0" strokeWidth="1.500" />
                    <path d="M7 5l2 1v7l4-2-2-1-1-3 5 3v2l-6 4-2-2z" fill="#1070d0" />
                  </svg>
                </SearchBox>
                <TaskSlots>
                  <TaskSlot>
                    <svg width="22" height="25" viewBox="0 0 22 25"><rect x="2" y="7" width="17" height="18" fill="#222" /><rect x="7" y="1" width="14" height="15" fill="#fafafa" /><rect x="7" y="7" width="12" height="9" fill="#c4c4c4" /></svg>
                  </TaskSlot>
                  <TaskSlot><Teams /></TaskSlot>
                  <TaskSlot><Folder /></TaskSlot>
                  <TaskSlot><Edge /></TaskSlot>
                  <TaskSlot><Store /></TaskSlot>
                  <TaskSlot><Shield /></TaskSlot>
                  <TaskSlot><Gear /><RunDot /></TaskSlot>
                  <TaskSlot $active><VpLogo w={19} h={23} /><RunDot $active /></TaskSlot>
                </TaskSlots>
                <Tray>
                  <TraySlot $w={30}><svg width="11" height="7" viewBox="0 0 11 7" fill="none" stroke="#111" strokeWidth="1.300"><path d="M.5 6.500l5-5 5 5" /></svg></TraySlot>
                  <TraySlot $w={32}><svg width="17" height="15" viewBox="0 0 17 15" fill="none" stroke="#111" strokeWidth="1.300"><path d="M4 12C2 12 1 11 1 9s1-3 3-3c1-3 3-4 5-4s4 1 5 4c2 0 2 2 2 3s-1 3-3 3z" fill="#ddd" /><path d="M2 1l13 13" /></svg></TraySlot>
                  <TraySlot $w={23}><svg width="16" height="18" viewBox="0 0 16 18" fill="none" stroke="#111"><path d="M10 2.500H.5v10H14V8" /><path d="M4 16.500h7M7 12.500v4" /><rect x="11.500" y=".5" width="4" height="7" rx="1.500" /></svg></TraySlot>
                  <TraySlot $w={16}><svg width="16" height="12" viewBox="0 0 16 12" fill="none" stroke="#333"><path d="M.5 4h2.500L7 1v10L3 8H.5zM10 4l4 4M14 4l-4 4" /></svg></TraySlot>
                  <Clock>18:09<br />08/01/2024</Clock>
                  <Bell><svg width="14" height="16" viewBox="0 0 14 16"><path d="M7 0c3 0 5 2 5 5v4l2 3H0l2-3V5c0-3 2-5 5-5z" fill="#0a3a94" /><path d="M5 13.500h4l-2 2.500z" fill="#0a3a94" /></svg></Bell>
                </Tray>
              </Taskbar>
            </Desktop>
          </Guest>
        </HostBody>
      </Screen>
    </>
  );
}
